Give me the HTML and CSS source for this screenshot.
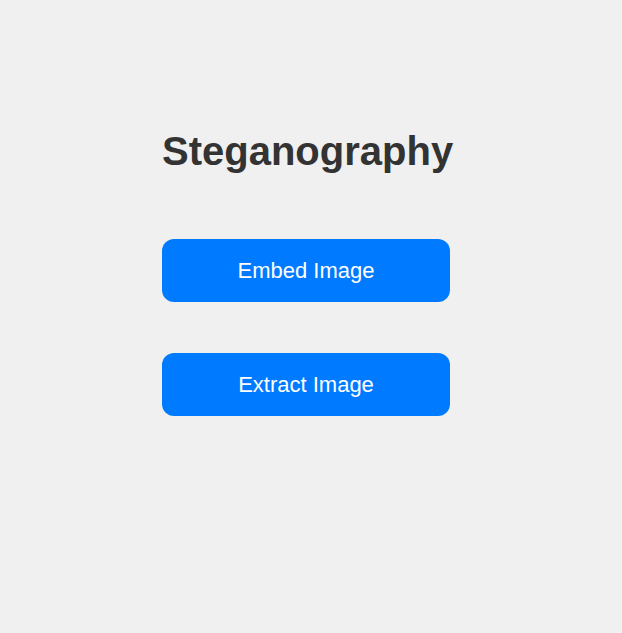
FILE: index.html
```html
<!DOCTYPE html>
<html>
<head>
<meta charset="utf-8">
<link rel="stylesheet" href="styles.css">
</head>
<body>
<main class="container">
  <h1 class="title">Steganography</h1>
  <div class="actions">
    <button class="btn">Embed Image</button>
    <button class="btn">Extract Image</button>
  </div>
</main>
</body>
</html>
```
FILE: styles.css
```css
html, body {
  margin: 0;
  padding: 0;
  background: #f0f0f0;
  font-family: "Liberation Sans", Arial, sans-serif;
}
body {
  padding-right: 10px;
}
.container {
  width: 288px;
  margin: 128px auto 0;
  display: flex;
  flex-direction: column;
  align-items: stretch;
}
.title {
  margin: 0 0 65px;
  font-size: 40px;
  line-height: 46px;
  font-weight: bold;
  color: #333333;
  text-align: center;
  white-space: nowrap;
}
.actions {
  display: flex;
  flex-direction: column;
  gap: 51px;
}
.btn {
  display: block;
  width: 100%;
  height: 63px;
  padding: 0;
  border: none;
  border-radius: 12px;
  background: #007bff;
  color: #ffffff;
  font-family: "Liberation Sans", Arial, sans-serif;
  font-size: 22px;
  cursor: pointer;
}
```
